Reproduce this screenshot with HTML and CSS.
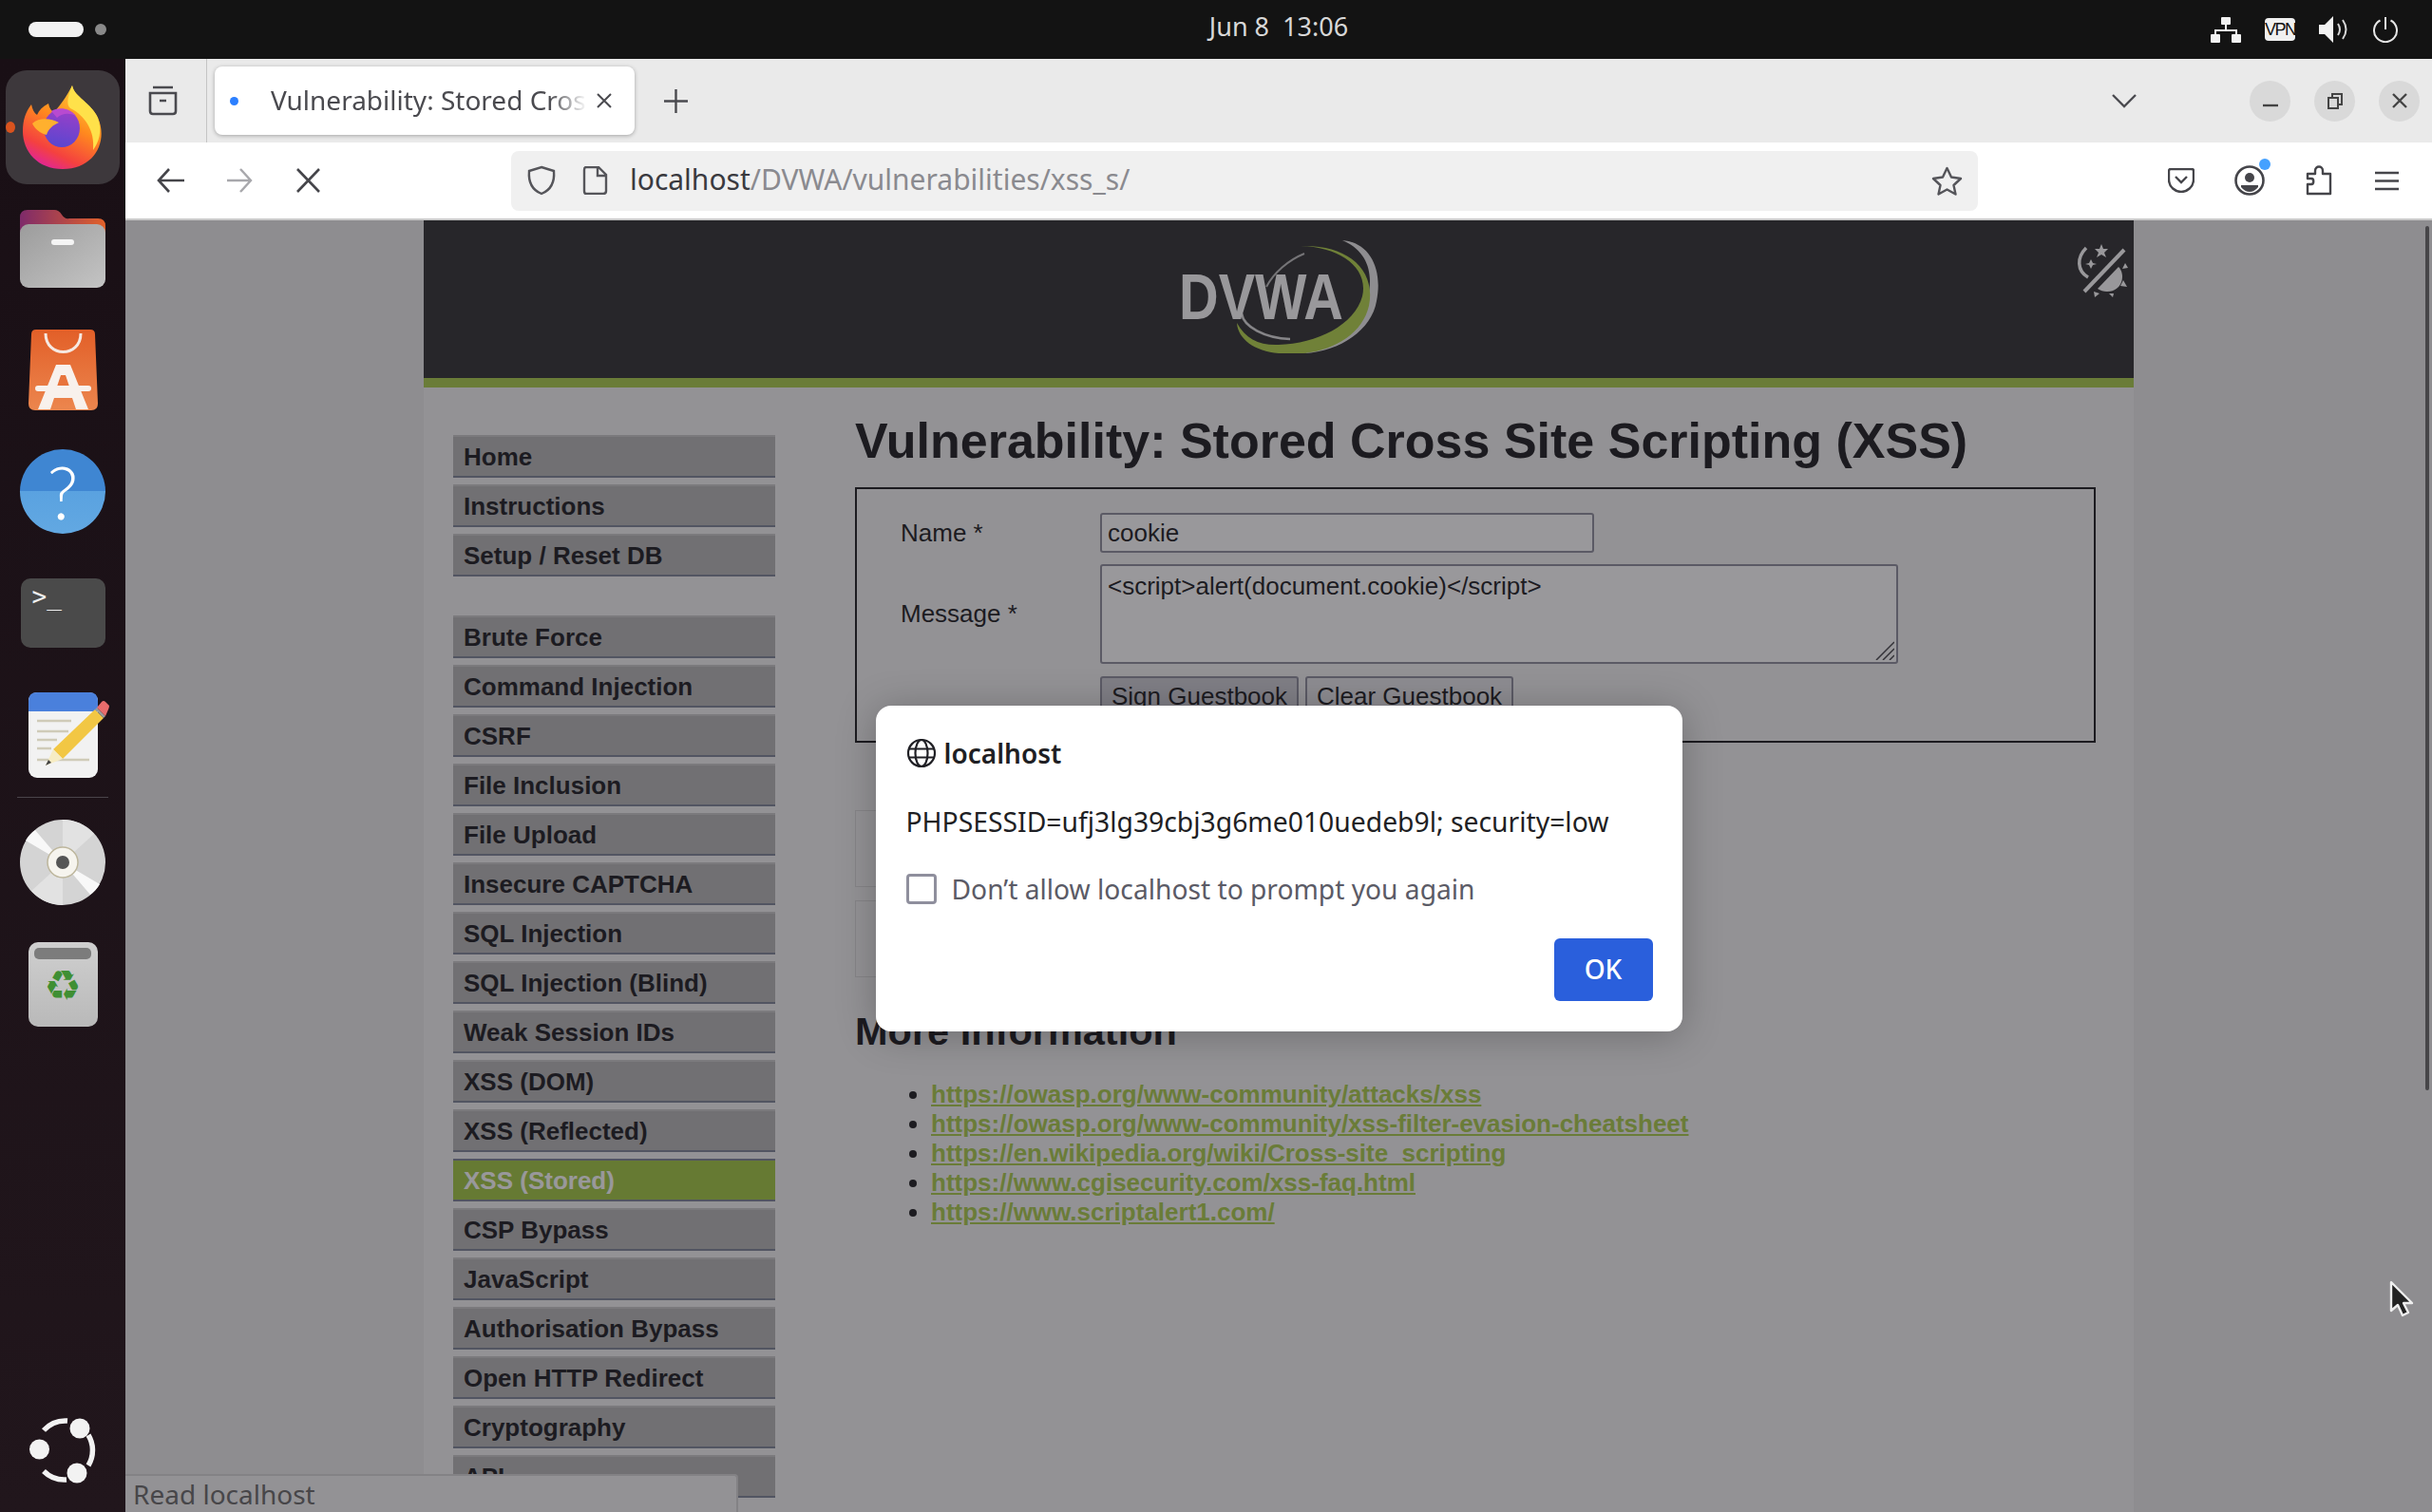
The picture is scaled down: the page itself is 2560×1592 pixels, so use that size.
FILE: index.html
```html
<!DOCTYPE html>
<html lang="en">
<head>
  <meta charset="UTF-8" />
  <title>Vulnerability: Stored Cross Site Scripting (XSS)</title>
  <link rel="stylesheet" href="styles.css">
</head>
<body>
  <header class="topbar">
    <div class="activities"><span class="pill"></span><span class="dot"></span></div>
    <div class="clock">Jun 8&nbsp; 13:06</div>
    <div class="tray">
      <svg width="32" height="27" viewBox="0 0 32 27"><g fill="#f2f2f2"><rect x="11" y="0" width="10" height="8" rx="1"/><rect x="0" y="18" width="10" height="9" rx="1"/><rect x="22" y="18" width="10" height="9" rx="1"/></g><path d="M16 8v6M5 18v-4h22v4" fill="none" stroke="#f2f2f2" stroke-width="2"/></svg>
      <span class="vpn">VPN</span>
      <svg width="31" height="28" viewBox="0 0 31 28"><path d="M0 9h6l9-9v28l-9-9H0z" fill="#f2f2f2"/><path d="M20 8q4 6 0 12M25 4q7 10 0 20" fill="none" stroke="#d8d8d8" stroke-width="2"/></svg>
      <svg width="28" height="27" viewBox="0 0 28 27"><path d="M8.5 3.5A12 12 0 1 0 19.5 3.5M14 0V13" fill="none" stroke="#e6e6e6" stroke-width="2"/></svg>
    </div>
  </header>

  <div class="desktop">
    <nav class="dock">
      <div class="dock-tile">
        <span class="running"></span>
        <svg width="85" height="88" viewBox="0 0 85 88">
          <defs>
            <linearGradient id="foxBody" x1="0.8" y1="0" x2="0.3" y2="1"><stop offset="0" stop-color="#ffd83a"/><stop offset="0.45" stop-color="#ff8a1e"/><stop offset="0.8" stop-color="#f4413f"/><stop offset="1" stop-color="#e0249a"/></linearGradient>
            <linearGradient id="foxGlobe" x1="0.6" y1="0" x2="0.4" y2="1"><stop offset="0" stop-color="#9a3fc8"/><stop offset="1" stop-color="#5a46d0"/></linearGradient>
          </defs>
          <path d="M52 0C54 12 72 18 79 34C90 58 76 88 42 88C16 88 0 70 0 48C0 36 3 28 9 20C10 25 12 29 15 31C17 26 21 22 27 19C28 24 30 27 33 28C40 20 46 12 52 0Z" fill="url(#foxBody)"/>
          <path d="M52 0C54 12 72 18 79 34C84 48 80 60 74 68C76 48 66 32 50 24C45 20 48 10 52 0Z" fill="#ffe14a"/>
          <ellipse cx="41" cy="45" rx="19" ry="20" fill="url(#foxGlobe)"/>
          <path d="M30 27C38 22 50 24 56 32C48 28 40 30 36 34Z" fill="#b84ad0"/>
          <path d="M10 40C18 33 30 35 38 39C31 42 27 46 25 52C18 50 13 46 10 40Z" fill="#ffb02e"/>
        </svg>
      </div>

      <svg class="dock-files" width="90" height="82" viewBox="0 0 90 82">
        <defs><linearGradient id="folderBack" x1="0" x2="1"><stop offset="0" stop-color="#7e2a6a"/><stop offset="1" stop-color="#e2622a"/></linearGradient>
        <linearGradient id="folderFront" x1="0" y1="0" x2="1" y2="1"><stop offset="0" stop-color="#9c9c9c"/><stop offset="1" stop-color="#c4c4c4"/></linearGradient></defs>
        <path d="M0 8q0-8 8-8h28q5 0 8 5t8 4h30q8 0 8 8v20H0z" fill="url(#folderBack)"/>
        <rect y="15" width="90" height="67" rx="9" fill="url(#folderFront)"/>
        <rect x="33" y="31" width="24" height="6" rx="3" fill="#f4f4f4"/>
      </svg>

      <svg class="dock-store" width="73" height="85" viewBox="0 0 73 85">
        <defs><linearGradient id="bag" x1="0" y1="0" x2="0" y2="1"><stop offset="0" stop-color="#e25f28"/><stop offset="1" stop-color="#ec864e"/></linearGradient></defs>
        <path d="M8 0H65Q70 0 70 5L73 78Q73 85 66 85H7Q0 85 0 78L3 5Q3 0 8 0Z" fill="url(#bag)"/>
        <path d="M18 4C18 30 55 30 55 4" fill="none" stroke="#f6e9e2" stroke-width="3"/>
        <path d="M29 37H44L63 84H50L46 72H27L23 84H10Z" fill="#f8f1ec"/>
        <path d="M34 48L30 60H43L39 48Z" fill="#e8743c"/>
        <path d="M10 62H63" stroke="#f8f1ec" stroke-width="6" stroke-linecap="round"/>
      </svg>

      <div class="dock-help">?</div>

      <div class="dock-term"><span class="prompt">&gt;_</span></div>

      <svg class="dock-writer" width="85" height="91" viewBox="0 0 85 91">
        <rect width="73" height="90" rx="9" fill="#f2f2f2"/>
        <path d="M0 20V9Q0 0 9 0H64Q73 0 73 9V20Z" fill="#4a80dc"/>
        <path d="M9 30H45M9 41H42M9 50H30M9 59H24M9 71H64" stroke="#cfcbb8" stroke-width="2.5"/>
        <path d="M26 60L70 18L79 27L36 70Z" fill="#f2c744"/>
        <path d="M26 60L36 70L18 77Z" fill="#f6ecc4"/>
        <path d="M18 77L21 71L24 74Z" fill="#444"/>
        <path d="M70 18L72 16L81 25L79 27Z" fill="#9a9a9a"/>
        <path d="M72 16L77 10Q79 8 81 10L85 14Q85 16 84 18L81 25Z" fill="#e86c6c"/>
      </svg>

      <div class="dock-sep"></div>

      <svg class="dock-disc" width="90" height="90" viewBox="0 0 90 90">
        <circle cx="45" cy="45" r="45" fill="#d4d4d4"/>
        <path d="M45 45L6 22Q10 15 16 11ZM45 45L84 68Q80 75 74 79Z" fill="#f8f8f8"/>
        <path d="M45 45L45 0A45 45 0 0 1 78 15ZM45 45L45 90A45 45 0 0 1 12 75Z" fill="#e2e2e2"/>
        <circle cx="45" cy="45" r="16" fill="#f6f4ee" stroke="#bdb69c" stroke-width="1.5"/>
        <circle cx="45" cy="45" r="7" fill="#555"/>
      </svg>

      <div class="dock-trash"><span class="trash-slot"></span><span class="recycle">&#9851;</span></div>

      <svg class="dock-ubuntu" width="71" height="69" viewBox="0 0 71 69">
        <path d="M15 13A31 31 0 0 1 40 3M62 18A31 31 0 0 1 62 50M39 65A31 31 0 0 1 15 56" fill="none" stroke="#f2f2f2" stroke-width="5.5"/>
        <circle cx="53" cy="11" r="10.5" fill="#f2f2f2"/><circle cx="10.5" cy="33" r="10.5" fill="#f2f2f2"/><circle cx="50" cy="58" r="10.5" fill="#f2f2f2"/>
      </svg>
    </nav>

    <main class="browser">
      <div class="tabbar">
        <svg class="tb-archive" width="33" height="32" viewBox="0 0 33 32"><path d="M6 2H27M3 8H30V27Q30 30 27 30H6Q3 30 3 27Z M13 16H20" fill="none" stroke="#4a4a4f" stroke-width="2.6"/></svg>
        <span class="tb-sep"></span>
        <div class="tab">
          <span class="tab-dot"></span>
          <span class="tab-title">Vulnerability: Stored Cros</span>
          <svg width="18" height="18" viewBox="0 0 18 18"><path d="M2 2L16 16M16 2L2 16" stroke="#4a4a4f" stroke-width="2"/></svg>
        </div>
        <svg class="tb-plus" width="27" height="27" viewBox="0 0 27 27"><path d="M13.5 1V26M1 13.5H26" stroke="#4a4a4f" stroke-width="2.4"/></svg>
        <svg class="tb-chevron" width="26" height="15" viewBox="0 0 26 15"><path d="M1 1L13 13L25 1" fill="none" stroke="#4a4a4f" stroke-width="2.4"/></svg>
        <div class="wm-btn"><svg width="18" height="18" viewBox="0 0 18 18"><path d="M1 14H17" stroke="#444" stroke-width="2.4"/></svg></div>
        <div class="wm-btn"><svg width="18" height="18" viewBox="0 0 18 18"><path d="M2 6H12V17H2ZM6 5V2H16V13H13" fill="none" stroke="#444" stroke-width="2"/></svg></div>
        <div class="wm-btn"><svg width="18" height="18" viewBox="0 0 18 18"><path d="M2 2L16 16M16 2L2 16" stroke="#444" stroke-width="2.4"/></svg></div>
      </div>

      <div class="navbar">
        <svg class="nv-back" width="30" height="26" viewBox="0 0 30 26"><path d="M29 13H2M13 1L2 13L13 25" fill="none" stroke="#45454a" stroke-width="2.6"/></svg>
        <svg class="nv-forward" width="28" height="26" viewBox="0 0 28 26"><path d="M1 13H26M15 1L26 13L15 25" fill="none" stroke="#a8a8ac" stroke-width="2.4"/></svg>
        <svg class="nv-stop" width="27" height="26" viewBox="0 0 27 26"><path d="M2 1L25 25M25 1L2 25" stroke="#45454a" stroke-width="2.6"/></svg>
        <div class="urlbar">
          <svg class="ub-shield" width="32" height="32" viewBox="0 0 32 32"><path d="M16 2L29 6C30 18 26 26 16 30C6 26 2 18 3 6Z" fill="none" stroke="#55555a" stroke-width="2.4"/></svg>
          <svg class="ub-page" width="27" height="30" viewBox="0 0 27 30"><path d="M4 1H17L25 9V26Q25 29 22 29H4Q2 29 2 26V4Q2 1 4 1ZM16 1V10H25" fill="none" stroke="#55555a" stroke-width="2.4"/></svg>
          <span class="url"><span class="url-host">localhost</span>/DVWA/vulnerabilities/xss_s/</span>
          <svg class="ub-star" width="33" height="31" viewBox="0 0 33 31"><path d="M16.5 2L21 11.5L31 13L23.5 20L25.5 29.5L16.5 24.5L7.5 29.5L9.5 20L2 13L12 11.5Z" fill="none" stroke="#55555a" stroke-width="2.4" stroke-linejoin="round"/></svg>
        </div>
        <svg class="nv-pocket" width="28" height="26" viewBox="0 0 28 26"><path d="M3 1H25Q27 1 27 3V12C27 20 20 25 14 25C8 25 1 20 1 12V3Q1 1 3 1ZM8 9L14 15L20 9" fill="none" stroke="#45454a" stroke-width="2.4"/></svg>
        <div class="nv-account">
          <svg width="32" height="32" viewBox="0 0 32 32"><circle cx="16" cy="16" r="14.5" fill="none" stroke="#45454a" stroke-width="2.6"/><circle cx="16" cy="13" r="5" fill="#45454a"/><path d="M7 21H25V23Q21 28 16 28Q11 28 7 23Z" fill="#45454a"/></svg>
          <span class="badge"></span>
        </div>
        <svg class="nv-puzzle" width="28" height="32" viewBox="0 0 28 32"><path d="M2 30V20H6C9 20 9 14 6 14H2V9H10V6C10 0 18 0 18 6V9H26V30Z" fill="none" stroke="#45454a" stroke-width="2.4" stroke-linejoin="round"/></svg>
        <svg class="nv-menu" width="25" height="21" viewBox="0 0 25 21"><path d="M0 2H25M0 10.5H25M0 19H25" stroke="#45454a" stroke-width="2.6"/></svg>
      </div>

      <div class="content">
        <div class="page">
          <div class="page-header">
            <svg class="logo" width="210" height="120" viewBox="0 0 210 120">
              <path d="M132 15C115 22 100 35 92 50" fill="none" stroke="#bdbdbd" stroke-width="2"/>
              <path d="M66 78C68 92 90 104 117 105" fill="none" stroke="#dcdcdc" stroke-width="2.5"/>
              <path d="M172 1C200 3 215 30 208 65C203 95 170 118 132 120C165 108 190 90 199 60C205 35 198 12 172 1Z" fill="#ececec"/>
              <path d="M128 7C175 5 208 30 200 70C192 105 150 125 105 120C80 118 62 105 61 88C70 105 85 112 105 111C145 110 185 90 193 60C200 30 170 8 128 7Z" fill="#b4d64c"/>
              <text x="0" y="84" class="logo-text" textLength="173" lengthAdjust="spacingAndGlyphs">DVWA</text>
            </svg>
            <svg class="theme-toggle" width="54" height="56" viewBox="0 0 54 56">
              <path d="M8 50L50 6" stroke="#fff" stroke-width="4"/>
              <path d="M10 4C0 14 0 28 12 35" fill="none" stroke="#fff" stroke-width="3.5"/>
              <path d="M26 0L28 5L33 5L29 9L31 14L26 11L21 14L23 9L19 5L24 5ZM15 16L17 20L21 21L17 22L15 26L13 22L9 21L13 20Z" fill="#fff"/>
              <path d="M22 47L44 24C52 32 48 50 32 50C28 50 25 49 22 47Z" fill="#fff"/>
              <path d="M18 50L24 52L19 56ZM34 52L39 52L38 56ZM46 44L53 45L49 38ZM48 26L54 25L51 20Z" fill="#fff"/>
            </svg>
          </div>
          <div class="page-body">
            <aside class="menu">
              <ul class="menu-group">
                <li class="menu-item">Home</li>
                <li class="menu-item">Instructions</li>
                <li class="menu-item">Setup / Reset DB</li>
              </ul>
              <ul class="menu-group">
                <li class="menu-item">Brute Force</li>
                <li class="menu-item">Command Injection</li>
                <li class="menu-item">CSRF</li>
                <li class="menu-item">File Inclusion</li>
                <li class="menu-item">File Upload</li>
                <li class="menu-item">Insecure CAPTCHA</li>
                <li class="menu-item">SQL Injection</li>
                <li class="menu-item">SQL Injection (Blind)</li>
                <li class="menu-item">Weak Session IDs</li>
                <li class="menu-item">XSS (DOM)</li>
                <li class="menu-item">XSS (Reflected)</li>
                <li class="menu-item selected">XSS (Stored)</li>
                <li class="menu-item">CSP Bypass</li>
                <li class="menu-item">JavaScript</li>
                <li class="menu-item">Authorisation Bypass</li>
                <li class="menu-item">Open HTTP Redirect</li>
                <li class="menu-item">Cryptography</li>
                <li class="menu-item">API</li>
              </ul>
            </aside>
            <section class="main-col">
              <h1>Vulnerability: Stored Cross Site Scripting (XSS)</h1>
              <form class="guestbook">
                <div class="form-row">
                  <label for="txName">Name *</label>
                  <input type="text" id="txName" value="cookie" />
                </div>
                <div class="form-row row-message">
                  <label for="mtxMessage">Message *</label>
                  <div class="textarea-wrap">
                    <textarea id="mtxMessage">&lt;script&gt;alert(document.cookie)&lt;/script&gt;</textarea>
                    <svg class="grip" width="20" height="20" viewBox="0 0 20 20"><path d="M1 20L20 1M8 20L20 8M15 20L20 15" stroke="#45454a" stroke-width="1.5"/></svg>
                  </div>
                </div>
                <div class="form-row row-buttons">
                  <button type="button" class="btn-sign">Sign Guestbook</button>
                  <button type="button">Clear Guestbook</button>
                </div>
              </form>
              <div class="entry first"></div>
              <div class="entry"></div>
              <h3>More Information</h3>
              <ul class="links">
                <li><a href="#">https://owasp.org/www-community/attacks/xss</a></li>
                <li><a href="#">https://owasp.org/www-community/xss-filter-evasion-cheatsheet</a></li>
                <li><a href="#">https://en.wikipedia.org/wiki/Cross-site_scripting</a></li>
                <li><a href="#">https://www.cgisecurity.com/xss-faq.html</a></li>
                <li><a href="#">https://www.scriptalert1.com/</a></li>
              </ul>
            </section>
          </div>
        </div>

        <div class="statuspanel">Read localhost</div>
        <div class="scrollthumb"></div>

        <div class="overlay">
          <div class="dialog">
            <div class="dialog-title">
              <svg width="32" height="32" viewBox="0 0 32 32"><g fill="none" stroke="#1f1f24" stroke-width="2.2"><circle cx="16" cy="16" r="14"/><ellipse cx="16" cy="16" rx="6.5" ry="14"/><path d="M2 11.5H30M2 20.5H30"/></g></svg>
              <span>localhost</span>
            </div>
            <p class="dialog-msg">PHPSESSID=ufj3lg39cbj3g6me010uedeb9l; security=low</p>
            <div class="dialog-check">
              <span class="checkbox"></span>
              <span>Don’t allow localhost to prompt you again</span>
            </div>
            <div class="dialog-actions"><button type="button" class="ok">OK</button></div>
          </div>
        </div>
      </div>
    </main>
  </div>

  <svg class="cursor" width="26" height="40" viewBox="0 0 26 40"><path d="M2 2V32L9 26L14 37L20 34L15 24H24Z" fill="#222" stroke="#eee" stroke-width="2.4" stroke-linejoin="round"/></svg>
</body>
</html>
```

FILE: styles.css
```css
* {
  box-sizing: border-box;
}
html, body {
  margin: 0;
  height: 100%;
}
body {
  width: 2560px;
  height: 1592px;
  overflow: hidden;
  background: #131313;
  font-family: "Noto Sans", sans-serif;
  position: relative;
}

/* top bar */
.topbar {
  height: 62px;
  background: #131313;
  display: grid;
  grid-template-columns: 392px 1fr 260px;
  align-items: center;
}
.activities {
  display: flex;
  align-items: center;
  gap: 12px;
  padding-left: 30px;
}
.pill {
  width: 58px;
  height: 16px;
  border-radius: 8px;
  background: #f2f2f2;
}
.dot {
  width: 12px;
  height: 12px;
  border-radius: 50%;
  background: #8a8a8a;
}
.clock {
  text-align: center;
  color: #d8d8d8;
  font-size: 27px;
  padding-bottom: 7px;
}
.tray {
  display: flex;
  align-items: center;
  justify-content: flex-end;
  gap: 25px;
  padding-right: 35px;
}
.vpn {
  width: 32px;
  height: 24px;
  border-radius: 4px;
  background: #f0f0f0;
  color: #131313;
  font: 18px "Liberation Sans", sans-serif;
  letter-spacing: -1.5px;
  text-align: center;
  line-height: 24px;
}

/* dock */
.desktop {
  display: flex;
  height: 1530px;
}
.dock {
  width: 132px;
  flex: none;
  display: flex;
  flex-direction: column;
  align-items: center;
  padding-top: 12px;
  padding-bottom: 30px;
  background: linear-gradient(#190f15, #21161c);
}
.dock-tile {
  position: relative;
  width: 120px;
  height: 120px;
  border-radius: 22px;
  background: #3d383c;
  display: flex;
  align-items: center;
  justify-content: center;
}
.running {
  position: absolute;
  left: 0;
  top: 54px;
  width: 10px;
  height: 12px;
  border-radius: 50%;
  background: #d9531e;
}
.dock-files { margin-top: 27px; }
.dock-store { margin-top: 44px; }
.dock-help {
  margin-top: 41px;
  width: 90px;
  height: 89px;
  border-radius: 50%;
  background: linear-gradient(#3f86d2 0, #3f86d2 50%, #5aa2e0 50%, #62a8e2 100%);
  color: #fff;
  font: 300 76px/89px "Lato", sans-serif;
  text-align: center;
}
.dock-term {
  margin-top: 47px;
  width: 89px;
  height: 73px;
  border-radius: 10px;
  background: #4a4a4a;
  padding: 5px 0 0 12px;
}
.prompt {
  color: #eee;
  font: 26px/28px "DejaVu Sans Mono", monospace;
}
.dock-writer { margin-top: 47px; margin-left: 12px; }
.dock-sep {
  margin-top: 19px;
  width: 96px;
  height: 1px;
  background: #4a444a;
}
.dock-disc { margin-top: 23px; }
.dock-trash {
  margin-top: 39px;
  width: 73px;
  height: 89px;
  border-radius: 10px;
  background: linear-gradient(#cfcfcf, #b9b9b9);
  padding-top: 6px;
  display: flex;
  flex-direction: column;
  align-items: center;
}
.trash-slot {
  width: 60px;
  height: 12px;
  border-radius: 5px;
  background: #7c7c7c;
}
.recycle {
  color: #3f8f33;
  font: 44px/56px "DejaVu Sans", sans-serif;
}
.dock-ubuntu { margin-top: auto; }

/* browser chrome */
.browser {
  flex: 1;
  display: flex;
  flex-direction: column;
  min-width: 0;
}
.tabbar {
  height: 88px;
  background: #eaeaea;
  display: flex;
  align-items: center;
  padding-right: 13px;
}
.tb-archive { margin-left: 23px; }
.tb-sep {
  margin-left: 29px;
  width: 1px;
  height: 100%;
  background: #c4c4c4;
}
.tab {
  margin-left: 8px;
  width: 442px;
  height: 72px;
  border-radius: 8px;
  background: #fff;
  box-shadow: 0 1px 4px rgba(0, 0, 0, 0.3);
  display: flex;
  align-items: center;
  padding: 0 23px 0 16px;
}
.tab-dot {
  flex: none;
  width: 9px;
  height: 9px;
  border-radius: 50%;
  background: #2b7fff;
}
.tab-title {
  margin-left: 34px;
  margin-right: 9px;
  padding-bottom: 3px;
  width: 333px;
  flex: none;
  white-space: nowrap;
  font-size: 28px;
  color: #4a4a4f;
  -webkit-mask-image: linear-gradient(to right, #000 88%, transparent);
  mask-image: linear-gradient(to right, #000 88%, transparent);
}
.tb-plus { margin-left: 30px; }
.tb-chevron { margin-left: auto; margin-right: 94px; }
.wm-btn {
  width: 43px;
  height: 43px;
  border-radius: 50%;
  background: #d9d9d9;
  display: flex;
  align-items: center;
  justify-content: center;
  margin-left: 25px;
}

.navbar {
  height: 82px;
  background: #fff;
  border-bottom: 2px solid #c9c9c9;
  display: flex;
  align-items: center;
}
.nv-back { margin-left: 33px; }
.nv-forward { margin-left: 43px; }
.nv-stop { margin-left: 45px; }
.urlbar {
  margin-left: 200px;
  width: 1544px;
  height: 63px;
  border-radius: 8px;
  background: #f0f0f0;
  display: flex;
  align-items: center;
  padding: 0 16px;
}
.ub-page { margin-left: 27px; }
.url {
  margin-left: 23px;
  padding-bottom: 4px;
  font-size: 30px;
  color: #8a8a8f;
}
.url-host { color: #3a3a3f; }
.ub-star { margin-left: auto; }
.nv-pocket { margin-left: 200px; }
.nv-account {
  margin-left: 42px;
  position: relative;
  height: 32px;
}
.badge {
  position: absolute;
  right: -6px;
  top: -7px;
  width: 12px;
  height: 12px;
  border-radius: 50%;
  background: #45a1ff;
}
.nv-puzzle { margin-left: 43px; }
.nv-menu { margin-left: 45px; }

/* page in the tab */
.content {
  position: relative;
  flex: 1;
  overflow: hidden;
  background: #ebebeb;
}
.page {
  width: 1800px;
  height: 100%;
  margin: 0 auto;
  background: #f4f4f4;
  font-family: "Liberation Sans", Arial, sans-serif;
  color: #1d1d1f;
}
.page-header {
  position: relative;
  height: 176px;
  background: #313132;
  border-bottom: 10px solid #aacc4b;
  display: flex;
  align-items: flex-start;
  justify-content: center;
  padding-top: 20px;
}
.logo-text {
  font: bold 68px "Liberation Sans", sans-serif;
  fill: #fff;
}
.theme-toggle {
  position: absolute;
  right: 6px;
  top: 25px;
}
.page-body {
  display: flex;
}
.menu {
  width: 339px;
  margin-left: 31px;
  padding-top: 50px;
  flex: none;
}
.menu-group {
  list-style: none;
  margin: 0 0 41px;
  padding: 0;
}
.menu-item {
  height: 45px;
  margin-bottom: 7px;
  padding-left: 11px;
  background: #b6b6b6;
  border-top: 2px solid #c8c8c8;
  border-bottom: 2px solid #7f8598;
  font-size: 26px;
  font-weight: bold;
  line-height: 42px;
  color: #1d1d22;
}
.menu-item.selected {
  background: #a2c843;
  border-top-color: #7f8598;
  color: #fff;
}
.main-col {
  margin-left: 84px;
  width: 1306px;
}
h1 {
  margin: 26px 0 19px;
  font-size: 52px;
  line-height: 60px;
  font-weight: bold;
}
.guestbook {
  height: 269px;
  border: 2px solid #1d1d1f;
  padding: 25px 0 0 46px;
}
.form-row {
  display: flex;
  align-items: center;
}
.form-row label {
  width: 210px;
  font-size: 26px;
  flex: none;
}
.form-row input, .form-row textarea {
  border: 2px solid #8f8f9d;
  border-radius: 3px;
  background: #fff;
  color: #1d1d1f;
  font: 26px "Liberation Sans", sans-serif;
  padding: 2px 6px;
}
.form-row input {
  width: 520px;
  height: 42px;
}
.row-message {
  margin-top: 12px;
}
.textarea-wrap {
  position: relative;
  height: 105px;
}
.form-row textarea {
  display: block;
  width: 840px;
  height: 105px;
  padding-top: 6px;
  line-height: 30px;
  resize: none;
}
.grip {
  position: absolute;
  right: 4px;
  bottom: 4px;
}
.row-buttons {
  margin-top: 13px;
  padding-left: 210px;
  gap: 7px;
}
.row-buttons button {
  height: 42px;
  padding: 0 10px;
  border: 2px solid #8f8f9d;
  border-radius: 3px;
  background: #e9e9ed;
  color: #1d1d1f;
  font: 26px "Liberation Sans", sans-serif;
}
.row-buttons .btn-sign {
  background: #d0d0d7;
}
.entry {
  width: 800px;
  height: 81px;
  margin-top: 14px;
  border: 1px solid #dadada;
}
.entry.first {
  margin-top: 71px;
}
h3 {
  margin: 32px 0 0;
  font-size: 41.5px;
  line-height: 50px;
  font-weight: bold;
}
.links {
  margin: 26px 0 0;
  padding-left: 80px;
  font-size: 26px;
  font-weight: bold;
  line-height: 31px;
}
.links a {
  color: #aacc4b;
}

.statuspanel {
  position: absolute;
  left: 0;
  bottom: 0;
  width: 645px;
  height: 40px;
  padding-left: 8px;
  background: #f4f4f4;
  border-top: 2px solid #d8d8d8;
  border-right: 2px solid #d8d8d8;
  border-top-right-radius: 4px;
  font-size: 28px;
  line-height: 38px;
  color: #6a6a6a;
}
.scrollthumb {
  position: absolute;
  right: 3px;
  top: 6px;
  width: 4px;
  height: 910px;
  border-radius: 2px;
  background: #6a6a6a;
}

/* alert */
.overlay {
  position: absolute;
  inset: 0;
  background: rgba(28, 27, 34, 0.45);
  display: flex;
  justify-content: center;
  align-items: flex-start;
  padding-top: 511px;
}
.dialog {
  width: 849px;
  height: 343px;
  padding: 32px 31px 32px 32px;
  border-radius: 16px;
  background: #fff;
  box-shadow: 0 4px 40px rgba(0, 0, 0, 0.25);
}
.dialog-title {
  display: flex;
  align-items: center;
  gap: 8px;
  height: 36px;
  font-size: 28px;
  font-weight: 600;
  color: #1f1f24;
}
.dialog-msg {
  margin: 35px 0 0;
  font-size: 28.3px;
  line-height: 38px;
  color: #1f1f24;
  white-space: nowrap;
}
.dialog-check {
  margin-top: 36px;
  height: 32px;
  display: flex;
  align-items: center;
  gap: 16px;
  font-size: 28.2px;
  line-height: 32px;
  color: #5b5b66;
}
.checkbox {
  width: 32px;
  height: 32px;
  border: 3px solid #8f8f9d;
  border-radius: 4px;
}
.dialog-actions {
  margin-top: 36px;
  display: flex;
  justify-content: flex-end;
}
.ok {
  width: 104px;
  height: 66px;
  padding-bottom: 3px;
  border: none;
  border-radius: 6px;
  background: #2a5fdc;
  color: #fff;
  font: 500 28px "Noto Sans", sans-serif;
}

.cursor {
  position: absolute;
  left: 2515px;
  top: 1348px;
}
```
